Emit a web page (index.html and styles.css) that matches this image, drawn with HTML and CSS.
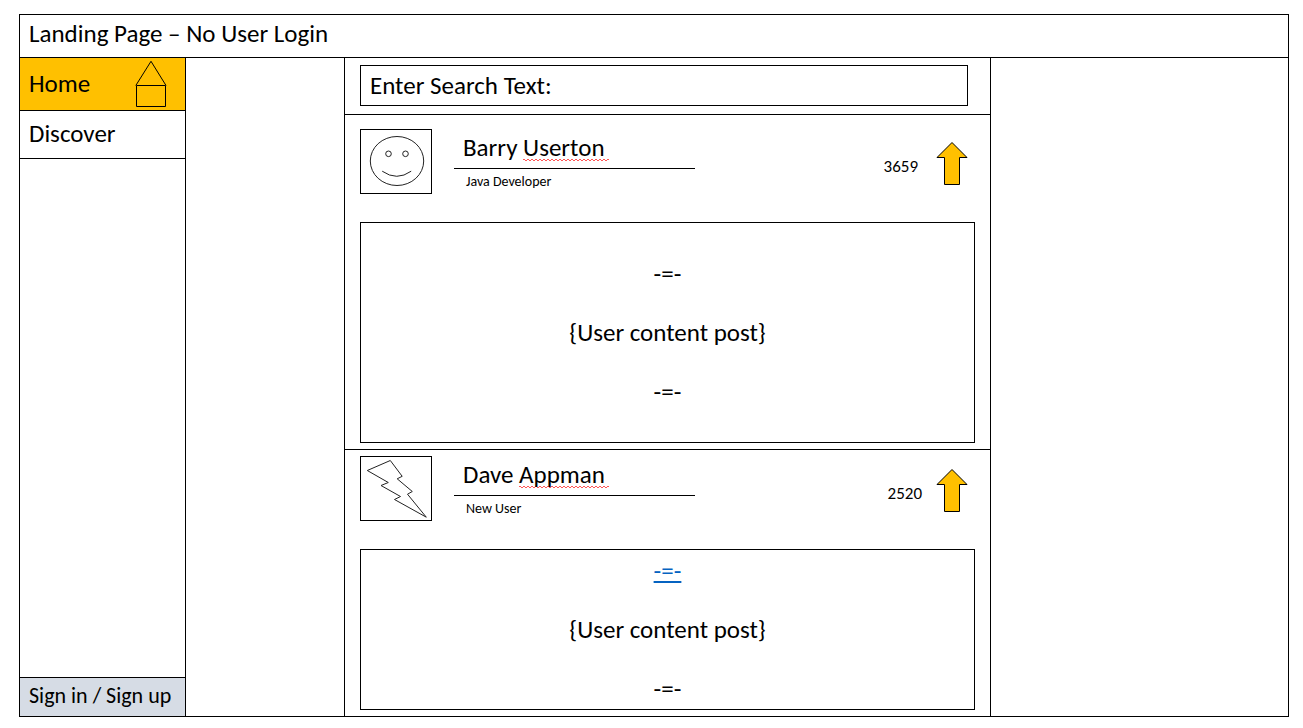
FILE: index.html
```html
<!DOCTYPE html>
<html lang="en">
<head>
<meta charset="utf-8">
<meta name="viewport" content="width=device-width, initial-scale=1">
<title>Landing Page – No User Login</title>
<link rel="stylesheet" href="styles.css">
</head>
<body>
<div class="frame">
  <header class="header"><h1 class="title">Landing Page – No User Login</h1></header>
  <div class="columns">
    <nav class="sidebar">
      <a class="nav-item nav-home" href="#home">Home
        <svg class="home-icon" width="32" height="48" viewBox="0 0 32 48" fill="none" stroke="#000" aria-hidden="true">
          <path d="M.8 25.5L16 1.3L31 25.5"/><path d="M1.5 25.5H30.5V46.5H1.5Z"/>
        </svg>
      </a>
      <a class="nav-item" href="#discover">Discover</a>
      <a class="nav-item nav-sign" href="#sign">Sign in / Sign up</a>
    </nav>
    <main class="feed">
      <form class="search">
        <input class="search-input" type="text" placeholder="Enter Search Text:" aria-label="Enter Search Text:">
      </form>
      <article class="post post-tall">
        <div class="post-head">
          <svg class="avatar" width="70" height="63" viewBox="0 0 70 63" fill="none" stroke="#222" role="img" aria-label="Smiley face">
            <ellipse cx="36" cy="31" rx="26.7" ry="24.5"/>
            <circle cx="27.5" cy="23.8" r="2.8"/><circle cx="44.5" cy="23.8" r="2.8"/>
            <path d="M21.2 41.2Q35.8 51.4 50.2 41.2"/>
          </svg>
          <div class="author">
            <h2 class="name">Barry <span class="misspelt">Userton</span></h2>
            <p class="role">Java Developer</p>
          </div>
          <div class="votes">
            <span class="count">3659</span>
            <button class="upvote" type="button" aria-label="Upvote Barry Userton">
              <svg width="34" height="46" viewBox="0 0 34 46" fill="#ffc000" stroke="#000"><path d="M17 1.5L32 16.5H24.5V43.5H9.5V16.5H2Z"/></svg>
            </button>
          </div>
        </div>
        <div class="content">
          <p>-=-</p>
          <p>{User content post}</p>
          <p>-=-</p>
        </div>
      </article>
      <article class="post">
        <div class="post-head">
          <svg class="avatar" width="70" height="63" viewBox="0 0 70 63" fill="none" stroke="#222" role="img" aria-label="Lightning bolt">
            <path d="M6.3 13.5L29.3 3.5L41.2 19.3L36.2 21.8L51.3 34.5L46.5 37.2L65.3 60.2L33.5 42.5L39.5 39.5L20 28.5L27.3 25.5Z"/>
          </svg>
          <div class="author">
            <h2 class="name">Dave <span class="misspelt">Appman</span></h2>
            <p class="role">New User</p>
          </div>
          <div class="votes votes-near">
            <span class="count">2520</span>
            <button class="upvote" type="button" aria-label="Upvote Dave Appman">
              <svg width="34" height="46" viewBox="0 0 34 46" fill="#ffc000" stroke="#000"><path d="M17 1.5L32 16.5H24.5V43.5H9.5V16.5H2Z"/></svg>
            </button>
          </div>
        </div>
        <div class="content">
          <p><a class="link" href="#post">-=-</a></p>
          <p>{User content post}</p>
          <p>-=-</p>
        </div>
      </article>
    </main>
  </div>
</div>
</body>
</html>
```
FILE: styles.css
```css
* { box-sizing: border-box; }

body {
  display: flex;
  min-height: 100vh;
  margin: 0;
  padding: 14px 14px 11px 19px;
  background: #fff;
  color: #000;
  font: 25px/30px Carlito, Lato, sans-serif;
}

h1, h2, p { margin: 0; font: inherit; }

.frame {
  display: flex;
  flex: 1;
  flex-direction: column;
  border: 1px solid #000;
}

.header {
  padding: 4px 9px 8px;
  border-bottom: 1px solid #000;
}

.columns {
  display: grid;
  flex: 1;
  grid-template-columns: 166px 158fr minmax(auto, 647px) 297fr;
}

.sidebar {
  display: flex;
  flex-direction: column;
  border-right: 1px solid #000;
}

.nav-item {
  display: flex;
  align-items: center;
  justify-content: space-between;
  height: 48px;
  padding: 0 9px 2px;
  border-bottom: 1px solid #000;
  color: #000;
  text-decoration: none;
  white-space: nowrap;
}

.nav-home {
  height: 53px;
  padding: 0 18px 0 9px;
  background: #ffc000;
}

.nav-sign {
  height: 39px;
  margin-top: auto;
  border-top: 1px solid #000;
  border-bottom: 0;
  background: #d6dce5;
  font-size: 22px;
}

.feed {
  display: flex;
  grid-column: 3;
  flex-direction: column;
  border: solid #000;
  border-width: 0 1px;
}

.search {
  padding: 7px 22px 8px 15px;
  border-bottom: 1px solid #000;
}

.search-input {
  display: block;
  width: 100%;
  height: 41px;
  padding: 0 9px;
  border: 1px solid #000;
  background: #fff;
  font: inherit;
}

.search-input::placeholder { color: #000; opacity: 1; }

.post {
  display: flex;
  flex: 1;
  flex-direction: column;
  padding: 6px 15px;
}

.post-tall {
  flex: none;
  padding-top: 14px;
  border-bottom: 1px solid #000;
}

.post-head {
  display: flex;
  align-items: flex-start;
  margin-bottom: 28px;
}

.avatar {
  box-sizing: content-box;
  border: 1px solid #000;
}

.author {
  width: 241px;
  margin-left: 22px;
}

.name {
  padding: 4px 9px 5px;
  border-bottom: 1px solid #000;
}

.misspelt {
  padding-right: 4px;
  background:
    linear-gradient(45deg, transparent 40%, #f55 40%, #f55 60%, transparent 60%) 0 100% / 4px 3px repeat-x,
    linear-gradient(135deg, transparent 40%, #f55 40%, #f55 60%, transparent 60%) 2px 100% / 4px 3px repeat-x;
  background-size: 4px 2px;
  background-position: 0 calc(100% - 2px), 2px calc(100% - 2px);
}

.role {
  padding: 3px 12px 0;
  font-size: 14px;
  line-height: 20px;
}

.votes {
  display: flex;
  align-items: center;
  gap: 17px;
  margin: 12px 6px 0 auto;
}

.votes-near { gap: 13px; }

.count {
  padding-top: 5px;
  font-size: 17px;
}

.upvote {
  display: block;
  padding: 0;
  border: 0;
  background: none;
}

.upvote svg { display: block; }

.content {
  display: flex;
  flex: 1;
  flex-direction: column;
  align-items: center;
  justify-content: center;
  gap: 29px;
  border: 1px solid #000;
}

.post-tall .content { min-height: 221px; }

.link {
  color: #0563c1;
  text-decoration-thickness: 2px;
  text-underline-offset: 2px;
}
```
